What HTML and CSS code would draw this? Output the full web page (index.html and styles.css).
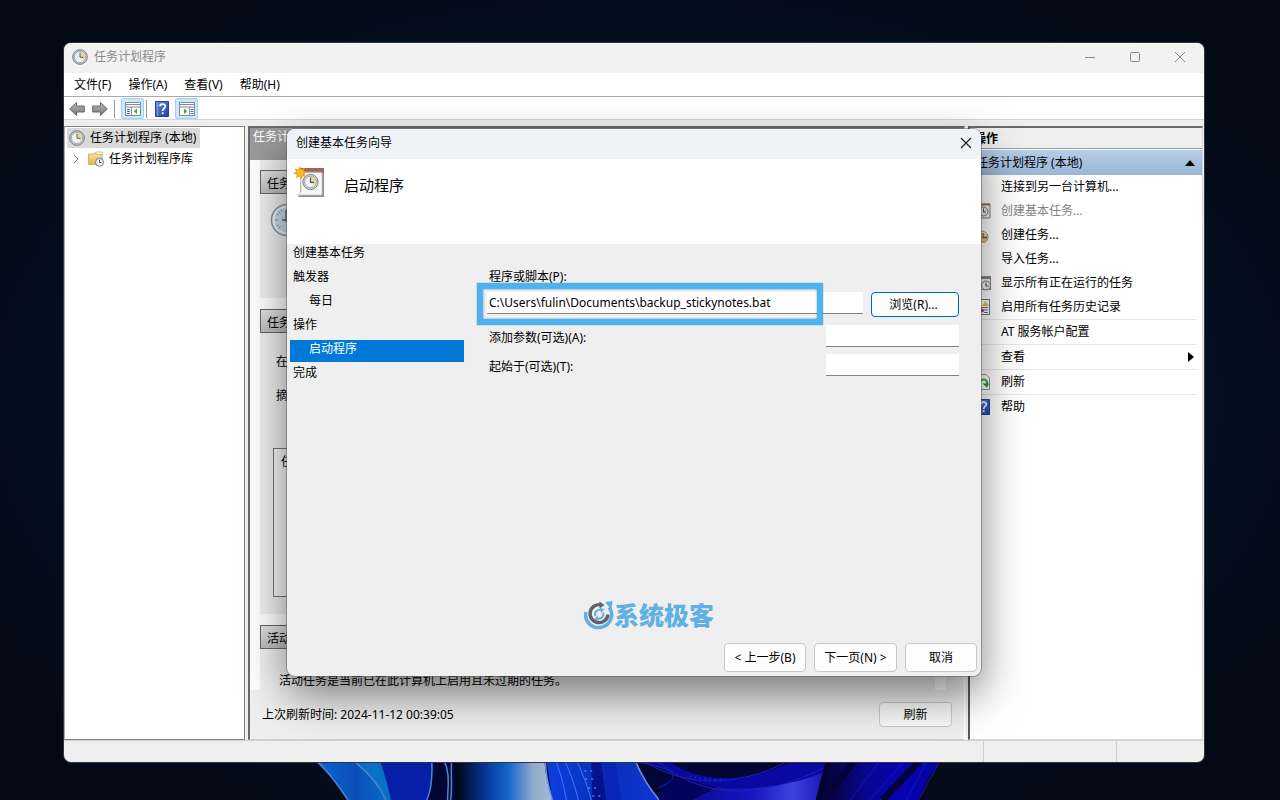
FILE: index.html
```html
<!DOCTYPE html>
<html lang="zh-CN">
<head>
<meta charset="utf-8">
<title>任务计划程序</title>
<link rel="stylesheet" href="styles.css">
</head>
<body>
<svg class="defs" width="0" height="0" aria-hidden="true">
  <defs>
    <linearGradient id="gold" x1="0" y1="0" x2="0" y2="1"><stop offset="0" stop-color="#f9e3a0"/><stop offset="1" stop-color="#e3b24f"/></linearGradient>
    <linearGradient id="grey" x1="0" y1="0" x2="0" y2="1"><stop offset="0" stop-color="#b8b8b8"/><stop offset="1" stop-color="#767676"/></linearGradient>
    <linearGradient id="blue" x1="0" y1="0" x2="1" y2="1"><stop offset="0" stop-color="#6a8fe0"/><stop offset="1" stop-color="#1f3f9e"/></linearGradient>
  </defs>
  <symbol id="clock" viewBox="0 0 16 16">
    <circle cx="8" cy="8" r="7.3" fill="#c9cdd1" stroke="#787d82" stroke-width="1"/>
    <circle cx="8" cy="8" r="5.6" fill="#edf2f8" stroke="#9499a0" stroke-width=".7"/>
    <path d="M8 8V2.900A5.100 5.100 0 0 1 12 11Z" fill="#efd595"/>
    <path d="M8 3.8V8.3H11.4" fill="none" stroke="#4c6076" stroke-width="1"/>
  </symbol>
  <symbol id="help" viewBox="0 0 14 16">
    <path d="M.5.5H13.5V15.5H.5Z" fill="url(#blue)" stroke="#27429a"/><path d="M2.5 1V15" stroke="#7f9ce4"/>
    <path d="M5 5.3C5 2.4 10.3 2.2 10.3 5.2C10.3 7.4 7.7 7.3 7.7 10" fill="none" stroke="#fff" stroke-width="1.7"/><rect x="6.8" y="11.3" width="1.8" height="1.8" fill="#fff"/>
  </symbol>
  <symbol id="task" viewBox="0 0 32 32">
    <path d="M8 4H31V31H5L7 28Z" fill="#8d8d8d"/><path d="M8 5H29V29H4L8 26Z" fill="#f7f7f7" stroke="#c7c7c7" stroke-width=".8"/>
    <rect x="7" y="2" width="24" height="3.500" fill="#a26553"/><path d="M7 6H31" stroke="#6f4439" stroke-width=".8"/>
    <circle cx="17.500" cy="16" r="7.600" fill="#d5dbe0" stroke="#767d84" stroke-width="1"/>
    <circle cx="17.500" cy="16" r="5.800" fill="#eff4fa" stroke="#8b9299" stroke-width=".8"/>
    <path d="M17.500 16V10.600A5.400 5.400 0 0 1 21.700 19Z" fill="#f0d48d"/><path d="M17.500 11.500V16.400H21" fill="none" stroke="#45586c" stroke-width="1.200"/>
    <path d="M7 0L8.300 3.500L11.500 1.700L10.700 5.200L14.500 6L11.200 7.700L13 11L9.500 10.200L8 14L6.300 10.500L3 12L3.800 8.500L0 7.500L3.400 5.700L1.500 2.500L5.200 3.400Z" fill="#f49a13"/><circle cx="7.300" cy="7" r="3.400" fill="#fdbb2c"/>
  </symbol>
</svg>

<svg class="wallpaper" viewBox="0 0 680 60" preserveAspectRatio="none" aria-hidden="true">
  <defs>
    <linearGradient id="p1"><stop offset="0" stop-color="#0b67d4"/><stop offset=".35" stop-color="#0a4fb7"/><stop offset=".6" stop-color="#0a68c8"/><stop offset="1" stop-color="#0517a0"/></linearGradient>
    <linearGradient id="p2"><stop offset="0" stop-color="#000511"/><stop offset=".3" stop-color="#033596"/><stop offset=".55" stop-color="#1667cd"/><stop offset=".8" stop-color="#91a9ca"/><stop offset="1" stop-color="#a0bdd4"/></linearGradient>
    <linearGradient id="p3"><stop offset="0" stop-color="#0b3fe0"/><stop offset=".5" stop-color="#0630b9"/><stop offset="1" stop-color="#1234d0"/></linearGradient>
    <linearGradient id="p4"><stop offset="0" stop-color="#060a7d"/><stop offset=".55" stop-color="#1414c0"/><stop offset=".8" stop-color="#3f43dd"/><stop offset="1" stop-color="#1712b8"/></linearGradient>
    <linearGradient id="p5"><stop offset="0" stop-color="#02021e"/><stop offset=".4" stop-color="#09068f"/><stop offset=".7" stop-color="#0503b4"/><stop offset="1" stop-color="#06049b"/></linearGradient>
  </defs>
  <path d="M32 20H661C648 34 642 48 638 60H66C56 44 45 32 32 20Z" fill="#020634"/>
  <path d="M32 20H152C151 38 150 50 145 60H66C56 44 45 32 32 20Z" fill="url(#p1)"/>
  <path d="M71 20C86 32 98 45 104 60H145C150 48 151 35 149 20Z" fill="#061fa9"/>
  <path d="M71 20H98C103 35 107 48 109 60H104C96 43 84 31 71 20Z" fill="#0a70c6"/>
  <path d="M34 20C48 33 57 46 66 60M71 20C86 32 98 45 104 60M150 20C151 38 150 50 145 60M162 20C169 32 166 48 166 60M170 20C169 34 171 48 169 60" fill="none" stroke="#4c86cc" stroke-width="1.500"/>
  <path d="M174 20H263C264 36 268 50 271 60H174Z" fill="url(#p2)"/>
  <path d="M265 20H354C362 36 369 48 378 60H271Z" fill="url(#p3)"/>
  <path d="M264 20C264 36 268 50 271 60M354 20C360 36 368 48 378 60" fill="none" stroke="#6f91e0" stroke-width="1.500"/>
  <path d="M274 20C280 35 283 48 285 60M283 20C290 35 294 48 297 60M295 20C302 35 307 48 310 60" fill="none" stroke="#3d79f4"/>
  <path d="M310 20H320L325 60H311Z" fill="#05128e"/><path d="M322 20H334L340 60H326Z" fill="#0825b8"/>
  <path d="M303 31H313M304 39H316M307 48H317M311 56H319" stroke="#91a7df" stroke-dasharray="2 4"/>
  <path d="M378 60C387 42 397 32 412 36C440 48 472 52 545 28L535 60Z" fill="url(#p4)"/>
  <path d="M380 44C397 31 412 39 436 47L411 60H378Z" fill="#02045c"/>
  <path d="M355 20H386C411 40 457 48 515 20H545V31C500 52 431 54 401 36Z" fill="#0908a1"/>
  <path d="M360 20C405 47 454 49 510 20M375 20C425 63 485 57 545 27M355 22C398 29 401 38 377 48" fill="none" stroke="#1c20b8"/>
  <path d="M409 36C420 39 432 40 444 39" stroke="#4657cc" stroke-dasharray="1 4" fill="none"/>
  <path d="M545 20H661C649 34 642 48 638 60H535Z" fill="url(#p5)"/>
  <path d="M600 20L570 60M625 20L589 60M647 20L626 60M660 20L638 60" stroke="#1512c4" stroke-width="1"/>
  <path d="M575 20L541 60M640 20L602 60" stroke="#05033a" stroke-width="7"/>
</svg>

<main class="window">
  <header class="titlebar">
    <svg class="ic16"><use href="#clock"/></svg><span>任务计划程序</span>
    <div class="caption-buttons">
      <button aria-label="最小化"><svg viewBox="0 0 12 12"><path d="M1 6.500H11"/></svg></button>
      <button aria-label="最大化"><svg viewBox="0 0 12 12"><rect x="1.500" y="1.500" width="9" height="9" rx="1"/></svg></button>
      <button aria-label="关闭"><svg viewBox="0 0 12 12"><path d="M1 1L11 11M11 1L1 11"/></svg></button>
    </div>
  </header>
  <nav class="menubar"><button>文件(F)</button><button>操作(A)</button><button>查看(V)</button><button>帮助(H)</button></nav>
  <div class="toolbar">
    <button aria-label="后退"><svg width="16" height="16" viewBox="0 0 16 16"><path d="M.7 8L7.500 1.500V5H15.300V11H7.500V14.500Z" fill="url(#grey)" stroke="#6a6a6a"/></svg></button>
    <button class="forward" aria-label="前进"><svg width="16" height="16" viewBox="0 0 16 16"><path d="M15.300 8L8.500 1.500V5H.7V11H8.500V14.500Z" fill="url(#grey)" stroke="#6a6a6a"/></svg></button>
    <i class="tool-sep"></i>
    <button class="toggled" aria-label="显示控制台树"><svg width="16" height="14" viewBox="0 0 16 14"><rect x=".5" y=".5" width="15" height="13" fill="#fff" stroke="#858b93"/><path d="M1 2.500H15M1 5H15" stroke="#7d8896"/><path d="M6.500 5V13" stroke="#8a919b"/><path d="M2 7.500H5M2 9.500H5M2 11.500H5" stroke="#3d70bb"/><path d="M12 6.500V12L8.800 9.200Z" fill="#3daa35"/></svg></button>
    <i class="tool-sep narrow"></i>
    <button class="tool-help" aria-label="帮助"><svg width="14" height="16"><use href="#help"/></svg></button>
    <button class="toggled" aria-label="显示操作窗格"><svg width="16" height="14" viewBox="0 0 16 14"><rect x=".5" y=".5" width="15" height="13" fill="#fff" stroke="#858b93"/><path d="M1 2.500H15M1 5H15" stroke="#7d8896"/><path d="M10.500 5V13" stroke="#8a919b"/><path d="M11.500 7.500H14.500M11.500 9.500H14.500M11.500 11.500H14.500" stroke="#3d70bb"/><path d="M5 6.500V12L8.200 9.200Z" fill="#3daa35"/></svg></button>
  </div>

  <div class="workspace">
    <aside class="tree">
      <div class="tree-root"><svg class="ic16"><use href="#clock"/></svg>任务计划程序 (本地)</div>
      <div class="tree-child"><svg class="chevron" viewBox="0 0 6 10"><path d="M1 1L5 5L1 9"/></svg>
        <svg class="ic16" viewBox="0 0 16 16"><path d="M.5 3V13.500H14V2H7L6 3Z" fill="url(#gold)" stroke="#d3b06a"/><path d="M8 1H14.500V3.500H8Z" fill="#fff" stroke="#d2ab57" stroke-width=".7"/><circle cx="11.500" cy="11.300" r="4" fill="#eef2f6" stroke="#707981"/><path d="M11.500 8.800V11.500H13.500" fill="none" stroke="#465666"/></svg>
        任务计划程序库</div>
    </aside>

    <section class="overview">
      <div class="overview-title">任务计</div>
      <div class="scroll-area">
        <section class="group group-about"><h2>任务</h2><div class="group-body">
          <svg width="34" height="34" viewBox="0 0 34 34"><circle cx="17" cy="17" r="15.500" fill="#e6eef5" stroke="#8a949d" stroke-width="1.500"/><circle cx="17" cy="17" r="13" fill="#cbdce9" stroke="#f8fbff"/><path d="M17 5V8M17 26V29M5 17H8M26 17H29M8.500 8.500L10.500 10.500M8.500 25.500L10.500 23.500M11 6.600L12 8.500M6.600 11L8.500 12M6.600 23L8.500 22" stroke="#7791a8"/><path d="M16 7V18H25M12 17H16" fill="none" stroke="#4d6780" stroke-width="1.500"/></svg>
        </div></section>
        <section class="group group-status"><h2>任务</h2><div class="group-body"><p>在</p><p>摘</p><div class="status-list">任</div></div></section>
        <section class="group group-active"><h2>活动</h2><div class="group-body"><p>活动任务是当前已在此计算机上启用且未过期的任务。</p></div></section>
        <i class="scroll-thumb"></i>
      </div>
      <div class="overview-footer"><span>上次刷新时间: 2024-11-12 00:39:05</span><button class="btn">刷新</button></div>
    </section>

    <aside class="actions">
      <h2>操作</h2>
      <div class="actions-group">任务计划程序 (本地)<svg width="10" height="6" viewBox="0 0 10 6"><path d="M0 6L5 0L10 6Z"/></svg></div>
      <ul>
        <li><button><i></i>连接到另一台计算机...</button></li>
        <li><button disabled><svg class="ic16" viewBox="0 0 16 16"><path d="M1 1H15V15H1Z" fill="#f4f1ef" stroke="#857a77"/><path d="M1 1.500H15" stroke="#9c6b62" stroke-width="2"/><circle cx="8.500" cy="8.500" r="4.500" fill="#e7ecea" stroke="#777"/><path d="M8.500 5.500V9H11" fill="none" stroke="#555"/></svg>创建基本任务...</button></li>
        <li><button><svg class="ic16" viewBox="0 0 16 16"><circle cx="7" cy="10" r="6" fill="url(#gold)" stroke="#a79c86"/><path d="M8 6V10.500H12" fill="none" stroke="#53606c" stroke-width="1.300"/></svg>创建任务...</button></li>
        <li><button><i></i>导入任务...</button></li>
        <li><button><svg class="ic16" viewBox="0 0 16 16"><rect x=".5" y="1.500" width="15" height="13" fill="#f4f4f4" stroke="#888"/><path d="M1 3H15" stroke="#7a8294" stroke-width="2"/><circle cx="11" cy="10.500" r="4.500" fill="#f2f2ef" stroke="#777"/><path d="M11 7.500V11H13.500M5 6V13" fill="none" stroke="#555"/></svg>显示所有正在运行的任务</button></li>
        <li><button><svg class="ic16" viewBox="0 0 16 16"><rect x="1.500" y=".5" width="13" height="15" fill="#fff" stroke="#7778a2"/><path d="M7 7L10.500 2L14 7Z" fill="#ecc436"/><path d="M4 8.500H13M9 11H13M9 13.500H13" stroke="#577fb4"/><circle cx="7" cy="11.500" r="2" fill="#cf3535"/></svg>启用所有任务历史记录</button></li>
        <li class="ruled"><button><i></i>AT 服务帐户配置</button></li>
        <li class="ruled"><button><i></i>查看<svg class="submenu" width="6" height="10" viewBox="0 0 6 10"><path d="M0 0L6 5L0 10Z"/></svg></button></li>
        <li class="ruled"><button><svg class="ic16" viewBox="0 0 16 16"><path d="M1.500.5H11L14.500 4V15.500H1.500Z" fill="#fff" stroke="#999"/><path d="M4 9A4.500 4.500 0 0 1 12 7.500V11" fill="none" stroke="#45a943" stroke-width="2"/><path d="M7.500 9.500H14L12 13.500Z" fill="#298e30"/></svg>刷新</button></li>
        <li class="ruled"><button><svg class="ic16"><use href="#help"/></svg>帮助</button></li>
      </ul>
    </aside>
  </div>
  <footer class="statusbar"><span></span><span></span><span></span></footer>

  <section class="dialog" role="dialog" aria-labelledby="wizard-title">
    <header class="dialog-title"><span id="wizard-title">创建基本任务向导</span><button aria-label="关闭"><svg width="12" height="12" viewBox="0 0 12 12"><path d="M1 1L11 11M11 1L1 11"/></svg></button></header>
    <div class="dialog-banner"><svg width="32" height="32"><use href="#task"/></svg><h1>启动程序</h1></div>
    <div class="dialog-body">
      <ol class="steps"><li>创建基本任务</li><li>触发器</li><li class="sub">每日</li><li>操作</li><li class="sub current">启动程序</li><li>完成</li></ol>
      <form class="program-form">
        <label for="program">程序或脚本(P):</label>
        <div class="program-row"><input id="program" type="text" value="C:\Users\fulin\Documents\backup_stickynotes.bat"><i class="highlight"></i><button type="button" class="btn browse">浏览(R)...</button></div>
        <div class="option-row"><label for="args">添加参数(可选)(A):</label><input id="args" type="text"></div>
        <div class="option-row"><label for="start">起始于(可选)(T):</label><input id="start" type="text"></div>
      </form>
    </div>
    <div class="brand">
      <svg width="30" height="30" viewBox="0 0 30 30" fill="none"><path d="M2 12A13 12.500 0 1 0 25 7.500" stroke="#5fb0e5" stroke-width="3.600"/><path d="M21 2L28.500 1L27.500 10Z" fill="#5fb0e5"/><path d="M17.500 5A9 9 0 1 0 24 14.500" stroke="#606267" stroke-width="3.400"/><path d="M15.500 1.500L20.500 5L15.500 8.500Z" fill="#606267"/><path d="M11.500 16A4.300 4.300 0 0 1 17 10.200M19 12.500A4.300 4.300 0 0 1 13.500 18.300" stroke="#5fb0e5" stroke-width="2"/><path d="M16 8L20.500 9L17 13ZM14.500 20.500L10 19.500L13.500 15.500Z" fill="#5fb0e5"/></svg>
      <span>系统极客</span>
    </div>
    <footer class="dialog-actions"><button class="btn">&lt; 上一步(B)</button><button class="btn next">下一页(N) &gt;</button><button class="btn cancel">取消</button></footer>
  </section>
</main>
</body>
</html>
```
FILE: styles.css
```css
* { box-sizing: border-box; }
body {
  margin: 0;
  min-height: 100vh;
  padding: 43px 76px 38px 64px;
  display: flex;
  position: relative;
  overflow: hidden;
  background: radial-gradient(ellipse at 50% 50%, #06183a 0%, #05122a 45%, #040a15 85%);
  color: #000;
  font: 12px/16px "Noto Sans", "Noto Sans CJK SC", sans-serif;
}
button, input { font: inherit; color: inherit; }
button { margin: 0; padding: 0; border: 0; background: none; }
h1, h2, p, ul, ol { margin: 0; padding: 0; font: inherit; list-style: none; }
svg { display: block; flex: none; }
.defs { position: absolute; }
.wallpaper { position: absolute; left: 22%; bottom: 0; width: 53%; height: 60px; }
.ic16 { width: 16px; height: 16px; }

.window {
  position: relative;
  flex: 1;
  display: flex;
  flex-direction: column;
  border-radius: 7px;
  background: #efefef;
  box-shadow: 0 0 0 1px #303640;
}
.titlebar { display: flex; align-items: center; height: 30px; padding: 0 2px 2px 8px; gap: 6px; background: #f2f2f2; color: #8a8a8a; border-radius: 7px 7px 0 0; }
.caption-buttons { display: flex; margin-left: auto; }
.caption-buttons button { width: 45px; height: 28px; display: grid; place-items: center; }
.caption-buttons svg { width: 12px; height: 12px; fill: none; stroke: #858585; }
.menubar { display: flex; gap: 17px; height: 24px; padding-left: 10px; background: #fff; border-bottom: 1px solid #aaa; }
.toolbar { display: flex; align-items: center; height: 23px; padding: 1px 0 0 5px; background: #fff; border-bottom: 1px solid #d4d4d4; }
.forward { margin-left: 7px; }
.tool-sep { width: 1px; height: 18px; margin: 0 6px 0 6px; background: #999; }
.tool-sep.narrow { margin: 0 5px 0 2px; }
.toggled { width: 23px; height: 21px; display: grid; place-items: center; background: #cce8ff; border: 1px solid #99d1ff; border-radius: 2px; }
.tool-help { margin: 0 6px 0 3px; }

.workspace { flex: 1; display: grid; grid-template-columns: 181px 1fr 235px; gap: 3px; padding: 6px 1px 0 0; }
.tree { background: #fff; border: 1px solid #828282; border-left-color: #aaa; padding: 1px 2px; }
.tree-root { display: flex; align-items: center; gap: 5px; width: max-content; height: 20px; padding: 0 4px 0 2px; background: #d9d9d9; border-radius: 1px; }
.tree-child { display: flex; align-items: center; gap: 5px; height: 22px; padding-left: 6px; }
.chevron { width: 6px; height: 10px; margin-right: 4px; fill: none; stroke: #777; }

.overview { display: flex; flex-direction: column; border: solid; border-width: 2px 1px 1px 2px; border-color: #696969 #fff #ccc #696969; background: #efefef; }
.overview-title { height: 32px; padding: 1px 3px; background: #9b9b9b; color: #fff; }
.scroll-area { position: relative; flex: 1; padding: 10px 18px 0 10px; background: linear-gradient(90deg, #fff 10px, #efefef 10px); }
.scroll-thumb { position: absolute; right: 18px; bottom: 0; top: 0; width: 11px; background: rgba(255, 255, 255, .9); }
.group { background: #efefef; }
.group h2 { height: 24px; padding: 5px 6px 0; border: 1px solid #666; background: linear-gradient(#e2e2e2, #bcbcbc); }
.group + .group { box-shadow: 0 -11px #fff; margin-top: 11px; }
.group-about .group-body { height: 104px; padding: 9px 10px; }
.group-status .group-body { height: 281px; padding: 21px 13px 17px; display: flex; flex-direction: column; }
.group-status p { padding-left: 3px; margin-bottom: 18px; }
.status-list { flex: 1; margin: 26px 0 0; padding: 5px 7px; border: 1px solid #777; background: #f7f7f7; }
.group-active .group-body { height: 41px; padding: 24px 19px 0; }
.overview-footer { display: flex; align-items: center; height: 49px; padding: 0 12px 0 12px; }
.overview-footer span { flex: 1; }

.actions { background: #fff; border: solid; border-width: 2px 1px 1px 2px; border-color: #696969 #d8d8d8 #d8d8d8 #555; }
.actions h2 { height: 21px; padding: 3px 4px 0; background: #efefef; border-bottom: 1px solid #999; font-weight: 700; }
.actions-group { display: flex; align-items: center; justify-content: space-between; height: 26px; padding: 0 7px 0 6px; border-top: 1px solid #fff; background: linear-gradient(#b5cde8, #9bb5d6); }
.actions li { margin: 0 5px 0 0; }
.actions li.ruled { border-top: 1px solid #e8e8e8; }
.actions li button { width: 100%; height: 24px; display: flex; align-items: center; gap: 10px; padding-left: 5px; text-align: left; }
.actions li i { width: 16px; }
.actions li button:disabled { color: #838383; }
.submenu { margin-left: auto; margin-right: 3px; }

.statusbar { display: grid; grid-template-columns: 1fr 133px 88px; height: 22px; border-top: 1px solid #d2d2d2; }
.statusbar span + span { border-left: 1px solid #d0d0d0; }

.dialog {
  position: absolute;
  inset: 86px 223px;
  display: flex;
  flex-direction: column;
  background: #efefef;
  border-radius: 8px;
  box-shadow: 0 0 0 1px rgba(90, 90, 90, .5), 0 18px 44px rgba(0, 0, 0, .5);
}
.dialog-title { display: flex; align-items: center; justify-content: space-between; height: 30px; padding: 0 9px 2px; background: #eef2f9; border-radius: 8px 8px 0 0; }
.dialog-title svg { fill: none; stroke: #222; stroke-width: 1.2; }
.dialog-banner { display: flex; height: 85px; padding: 7px 6px; gap: 19px; background: #fff; }
.dialog-banner h1 { padding-top: 9px; font-size: 15px; line-height: 20px; }
.dialog-body { flex: 1; display: grid; grid-template-columns: 174px 1fr; padding: 0 22px 0 3px; gap: 23px; }
.steps li { height: 22px; margin-bottom: 2px; padding: 1px 3px 0; }
.steps .sub { padding-left: 19px; }
.steps .current { background: #0078d7; color: #fff; }
.program-form { padding-top: 25px; }
.program-form label { display: block; padding-left: 2px; }
.program-form input { height: 22px; padding: 0 2px; border: 0; border-bottom: 1px solid #828282; background: #fff; border-radius: 0; outline: 0; }
.program-row { position: relative; display: flex; align-items: start; gap: 8px; margin-top: 7px; }
.program-row input { flex: 1; min-width: 0; }
.highlight { position: absolute; left: -10px; top: -9px; right: 136px; height: 42px; border: 6px solid #4bb3f1; box-shadow: inset 0 0 2px #777, 0 0 1px #777; pointer-events: none; }
.option-row { display: flex; justify-content: space-between; align-items: center; margin-top: 8px; }
.option-row + .option-row { margin-top: 7px; }
.option-row label { padding-top: 3px; }
.option-row input { width: 133px; }
.btn { height: 29px; border: 1px solid #c8c8c8; border-radius: 4px; background: #fdfdfd; text-align: center; }
.btn.browse { width: 88px; height: 25px; padding-right: 3px; border-color: #0067b8; }
.overview-footer .btn { width: 73px; height: 25px; background: rgba(253, 253, 253, .6); }
.brand { display: flex; align-items: center; padding-left: 297px; height: 30px; margin-bottom: 13px; color: #5fb0e5; font-size: 25px; font-weight: 900; line-height: 30px; }
.dialog-actions { display: flex; justify-content: flex-end; gap: 8px; padding: 0 4px 4px; }
.dialog-actions .btn { width: 82px; }
.dialog-actions .next { width: 83px; }
.dialog-actions .cancel { width: 72px; }
```
